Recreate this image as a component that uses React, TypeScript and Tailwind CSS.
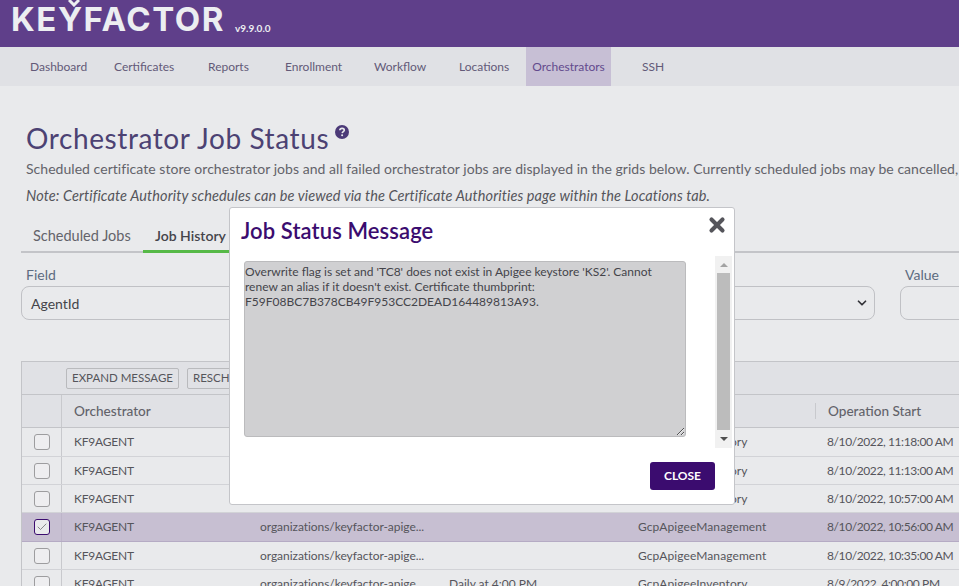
import { ChevronDown, Check, X } from "lucide-react";

const navItems = ["Dashboard", "Certificates", "Reports", "Enrollment", "Workflow", "Locations", "Orchestrators", "SSH"];
const navWidths = ["w-[84px]", "w-[94px]", "w-[77px]", "w-[89px]", "w-[85px]", "w-[67px]", "w-[85px]", "w-[84px]"];

const rows = [
  { path: "organizations/keyfactor-apige...", schedule: "", type: "GcpApigeeInventory", start: "8/10/2022, 11:18:00 AM", h: "h-[29px]" },
  { path: "organizations/keyfactor-apige...", schedule: "", type: "GcpApigeeInventory", start: "8/10/2022, 11:13:00 AM", h: "h-[28px]" },
  { path: "organizations/keyfactor-apige...", schedule: "", type: "GcpApigeeInventory", start: "8/10/2022, 10:57:00 AM", h: "h-[28px]" },
  { path: "organizations/keyfactor-apige...", schedule: "", type: "GcpApigeeManagement", start: "8/10/2022, 10:56:00 AM", h: "h-[29px]", selected: true },
  { path: "organizations/keyfactor-apige...", schedule: "", type: "GcpApigeeManagement", start: "8/10/2022, 10:35:00 AM", h: "h-[28px]" },
  { path: "organizations/keyfactor-apige...", schedule: "Daily at 4:00 PM", type: "GcpApigeeInventory", start: "8/9/2022, 4:00:00 PM", h: "h-[28px]" },
];

function Row({ row }: { row: (typeof rows)[number] }) {
  return (
    <div
      className={`grid grid-cols-[40px_186px_189px_189px_189px_1fr] items-center border-b ${row.h} ${
        row.selected ? "bg-[#c7bfd2] border-[#b5abc4]" : "border-[#d2d3d7]"
      }`}
    >
      <div className={`flex h-full items-center justify-center border-r ${row.selected ? "border-[#bdb5c9]" : "border-[#c8c9cd]"}`}>
        <span
          className={`flex h-4 w-4 items-center justify-center rounded-[3px] border ${
            row.selected ? "border-[#3b0c6f] bg-[#e9eaec]" : "border-[#9d9d9f] bg-[#eeeef0]"
          }`}
        >
          {row.selected && <Check className="h-3 w-3 text-[#4b4b50]" strokeWidth={1.25} />}
        </span>
      </div>
      <div className="pl-3 tracking-[-0.2px]">KF9AGENT</div>
      <div className="pl-3 tracking-[-0.05px]">{row.path}</div>
      <div className="pl-3">{row.schedule}</div>
      <div className="pl-3 tracking-[0.1px]">{row.type}</div>
      <div className="whitespace-nowrap pl-3 tracking-[-0.4px]">{row.start}</div>
    </div>
  );
}

export default function App() {
  return (
    <div className="relative h-[586px] w-[959px] overflow-hidden bg-[#e9eaec] font-['Lato',sans-serif] text-[#55555b]">
      {/* Header */}
      <header className="flex h-[47px] items-end bg-[#5f3f8a] pb-[14px] pl-[11px] text-[#eceef1]">
        <div className="relative font-['Inter',sans-serif] text-[33px] leading-[28px] font-bold tracking-[1.55px]">
          KEYFACTOR
          <svg className="absolute top-[-5px] left-[57px] h-[7px] w-[12px]" viewBox="0 0 12 7">
            <path d="M1 0 6 5 11 0" fill="none" stroke="currentColor" strokeWidth="3" />
          </svg>
        </div>
        <span className="mb-[-1px] ml-[10px] text-[10px] leading-3 font-bold">v9.9.0.0</span>
      </header>

      {/* Nav */}
      <nav className="flex h-[39px] items-center bg-[#e0e1e5] pl-[30px] text-[12px] text-[#635a78]">
        {navItems.map((item, i) => (
          <div key={item} className={`flex h-full shrink-0 items-center ${navWidths[i]}`}>
            {item === "Orchestrators" ? (
              <span className="flex h-full w-[85px] items-center justify-center bg-[#c7bfd5] text-[#634a8d]">{item}</span>
            ) : (
              <span className={item === "SSH" ? "ml-[31px]" : ""}>{item}</span>
            )}
          </div>
        ))}
      </nav>

      <main>
        {/* Page title */}
        <div className="mt-[36px] flex pl-[26px] text-[#4c4273]">
          <h1 className="text-[28px] leading-[32px] tracking-[0.6px]">Orchestrator Job Status</h1>
          <svg className="mt-[3px] ml-[6px] h-[14px] w-[14px]" viewBox="0 0 14 14">
            <circle cx="7" cy="7" r="7" fill="#4c3a78" />
            <path d="M4.8 5.3C4.9 4 5.9 3.4 7.1 3.4 8.4 3.4 9.3 4.1 9.3 5.2 9.3 6.6 7.4 6.7 7.2 8.1" fill="none" stroke="#e9eaec" strokeWidth="1.6" />
            <circle cx="7.1" cy="10.2" r="1" fill="#e9eaec" />
          </svg>
        </div>
        <p className="mt-[5px] whitespace-nowrap pl-[26px] text-[14px] leading-5 tracking-[0.04px] text-[#63636a]">
          Scheduled certificate store orchestrator jobs and all failed orchestrator jobs are displayed in the grids below. Currently scheduled jobs may be cancelled,
        </p>
        <p className="mt-[7px] whitespace-nowrap pl-[26px] text-[14.5px] leading-5 tracking-[0.1px] text-[#55555b] italic">
          Note: Certificate Authority schedules can be viewed via the Certificate Authorities page within the Locations tab.
        </p>

        {/* Tabs */}
        <div className="mt-[14px] ml-[21px] flex h-[33px] border-b-2 border-[#c3c4c8] text-[14.5px]">
          <div className="flex h-[33px] w-[122px] items-center pb-[2px] pl-[12px] text-[#63636a]">Scheduled Jobs</div>
          <div className="flex h-[33px] w-[200px] items-center border-b-[3px] border-[#56b947] pl-[12px] text-[14px] font-semibold text-[#44444a]">Job History</div>
        </div>

        {/* Query fields */}
        <div className="mt-[13px] flex pl-[21px] text-[14px]">
          <div>
            <div className="pl-[5px] leading-[17px] text-[#5d6b80]">Field</div>
            <div className="mt-[3px] flex h-[34px] w-[300px] items-center rounded-lg border border-[#c0c1c5] pl-[9px] text-[#44444a]">AgentId</div>
          </div>
          <div className="ml-[20px]">
            <div className="h-[17px]" />
            <div className="mt-[3px] flex h-[34px] w-[534px] items-center justify-end rounded-lg border border-[#c0c1c5] pr-[5px]">
              <ChevronDown className="h-[14px] w-[14px] text-[#333338]" strokeWidth={3} />
            </div>
          </div>
          <div className="ml-[25px]">
            <div className="pl-[5px] leading-[17px] text-[#5d6b80]">Value</div>
            <div className="mt-[3px] h-[34px] w-[100px] rounded-lg border border-[#c0c1c5]" />
          </div>
        </div>

        {/* Grid */}
        <section className="mt-[41px] ml-[21px] w-[960px] border-x border-t border-[#c3c4c8] text-[12px] text-[#55555b]">
          <div className="flex h-[33px] items-center gap-2 border-b border-[#c3c4c8] bg-[#e0e1e5] pl-[44px] text-[11.5px]">
            <span className="flex h-[21px] items-center rounded-[2px] border border-[#b9babd] px-[5px]">EXPAND MESSAGE</span>
            <span className="flex h-[21px] items-center rounded-[2px] border border-[#b9babd] px-[5px]">RESCHEDULE</span>
          </div>
          <div className="grid h-[33px] grid-cols-[40px_186px_189px_189px_189px_1fr] items-center border-b border-[#c3c4c8] bg-[#e0e1e5] text-[13.6px] font-medium text-[#63636a]">
            <div className="h-full border-r border-[#c8c9cd]" />
            <div className="pl-3">Orchestrator</div>
            <div className="pl-3">Client Machine</div>
            <div className="pl-3">Schedule</div>
            <div className="pl-3">Job Type</div>
            <div className="flex h-4 items-center border-l border-[#c8c9cd] pl-3">Operation Start</div>
          </div>
          {rows.map((row) => (
            <Row key={row.start} row={row} />
          ))}
        </section>
      </main>

      {/* Job status dialog */}
      <div className="absolute top-[207px] left-[229px] flex h-[298px] w-[506px] flex-col rounded-[3px] border border-[#c4c5c9] bg-white">
        <button className="absolute top-[6px] right-[6px] text-[#55555b]">
          <X className="h-[22px] w-[22px]" strokeWidth={4.5} />
        </button>
        <h2 className="mt-[9px] ml-[11px] text-[22px] leading-7 font-semibold tracking-[0.1px] text-[#3b0c6f]">Job Status Message</h2>
        <div className="mt-[11px] flex">
          <textarea
            readOnly
            className="mt-[5px] ml-[14px] h-[176px] w-[442px] rounded-[3px] border border-[#bbbbbd] bg-[#d0d0d2] py-[2px] text-[12px] leading-[15px] text-[#44444a] outline-none"
            value="Overwrite flag is set and 'TC8' does not exist in Apigee keystore 'KS2'. Cannot renew an alias if it doesn't exist. Certificate thumbprint: F59F08BC7B378CB49F953CC2DEAD164489813A93."
          />
          <div className="ml-[29px] flex h-[192px] w-[17px] flex-col items-center bg-[#f1f1f1]">
            <div className="flex h-[17px] items-center">
              <div className="h-0 w-0 border-x-[4px] border-b-[4px] border-x-transparent border-b-[#a3a3a3]" />
            </div>
            <div className="h-[157px] w-[13px] bg-[#bcbcbc]" />
            <div className="flex h-[17px] items-center">
              <div className="h-0 w-0 border-x-[4px] border-t-[4px] border-x-transparent border-t-[#505050]" />
            </div>
          </div>
        </div>
        <div className="mt-[14px] flex justify-end pr-[19px]">
          <button className="h-[28px] w-[65px] rounded-[3px] bg-[#3b0c6f] text-[12px] font-bold text-white">CLOSE</button>
        </div>
      </div>
    </div>
  );
}
